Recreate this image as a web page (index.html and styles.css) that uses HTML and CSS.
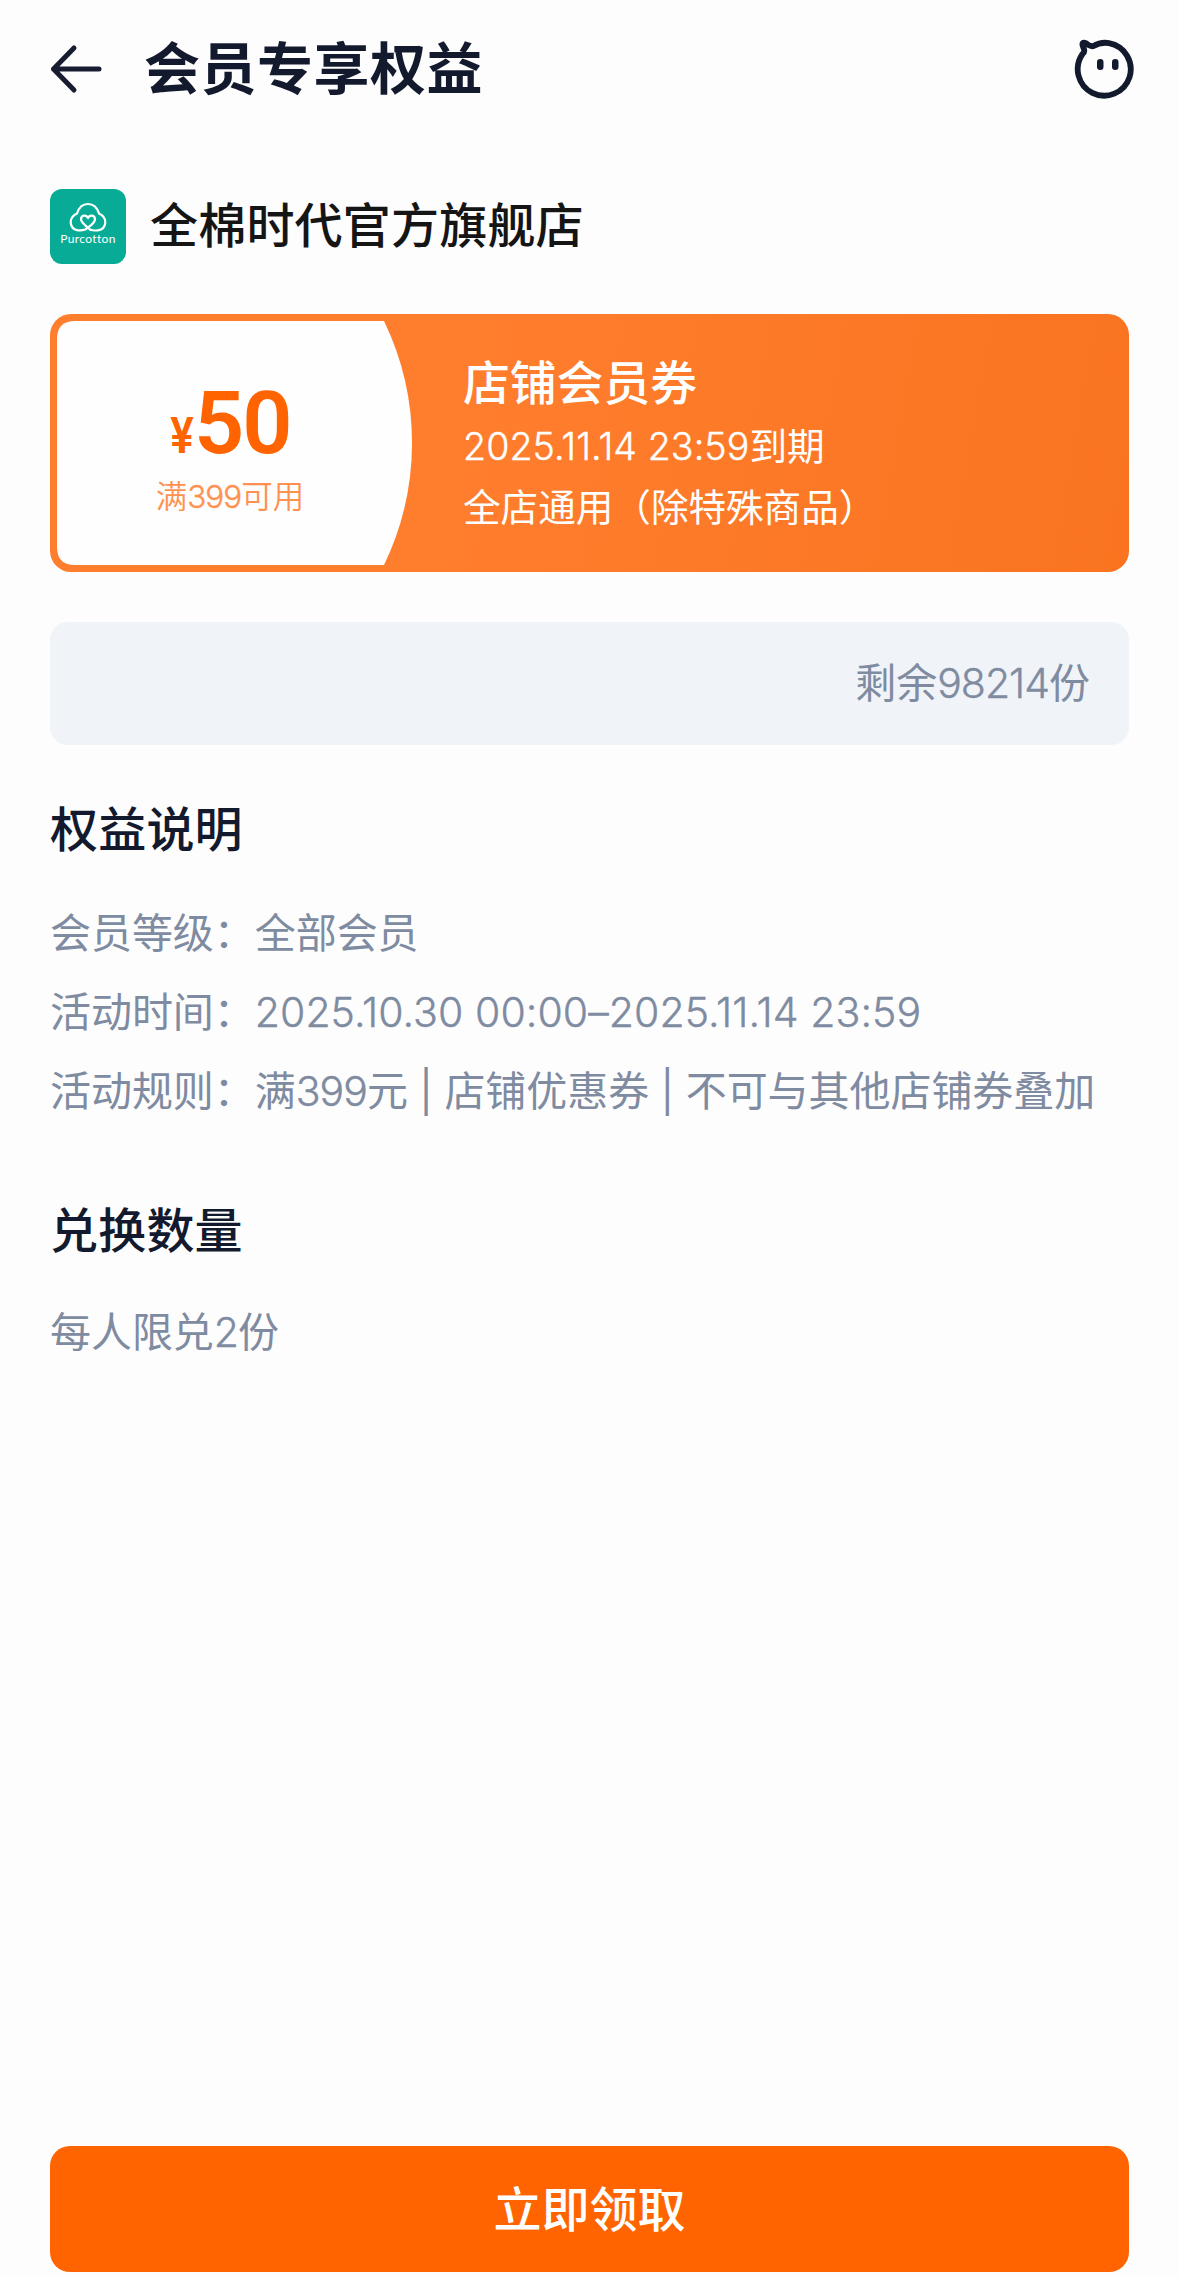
FILE: index.html
```html
<!DOCTYPE html>
<html lang="zh-CN">
<head>
<meta charset="utf-8">
<title>会员专享权益</title>
<link rel="stylesheet" href="styles.css">
</head>
<body>
<div class="page">
  <header class="topbar">
    <svg class="back" width="54" height="50" viewBox="0 0 54 50" fill="none" stroke="#171c30" stroke-width="5" stroke-linecap="round" stroke-linejoin="round"><path d="M24 4 3.500 25 24 46M3.500 25H49"/></svg>
    <h1 class="title">会员专享权益</h1>
    <svg class="service" width="62" height="62" viewBox="0 0 62 62"><path d="M20 8.200C25 5.300 31 4.200 36 5.100A26.500 26.500 0 1 1 9.500 16Q12.600 13.500 10.300 9.500C8.200 5 10 4.100 13 5.200Q16.500 8.500 20 8.200Z" fill="none" stroke="#131a2e" stroke-width="5.800" stroke-linejoin="round"/><rect x="24" y="21" width="6.500" height="11" rx="3.200" fill="#131a2e"/><rect x="39" y="21" width="6.500" height="11" rx="3.200" fill="#131a2e"/></svg>
  </header>
  <main class="content">
    <div class="store">
      <div class="logo">
        <svg width="38" height="30" viewBox="0 0 38 30" fill="none" stroke="#fff" stroke-width="2.200" stroke-linecap="round" stroke-linejoin="round"><path d="M19 25.500C16 28.500 12.500 28.800 9 28.300 0 27-1 15.500 8 11.500 10 5 14 2 19 2S28 5 30 11.500C39 15.500 38 27 29 28.300 26 28.700 23.500 28.600 21.500 27.800"/><path d="M19 25.500Q25.500 21 26 17.500C26 12.500 20.500 12.500 19 16 17.500 12.500 12 12.500 12 17.500Q12.500 21 21.500 27.800"/></svg>
        <span class="brand">Purcotton</span>
      </div>
      <span class="store-name">全棉时代官方旗舰店</span>
    </div>
    <section class="coupon">
      <div class="amount-panel">
        <svg class="panel-shape" viewBox="0 0 355 244"><path d="M18 0H327Q355 58 355 122T327 244H18Q0 244 0 226V18Q0 0 18 0Z" fill="#fefefe"/></svg>
        <div class="amount"><span class="yen">¥</span><span class="num">50</span></div>
        <div class="condition">满<span class="tight">399</span>可用</div>
      </div>
      <div class="coupon-info">
        <div class="coupon-title">店铺会员券</div>
        <div class="coupon-line"><span class="time">2025.11.14 23:59</span>到期</div>
        <div class="coupon-line">全店通用（除特殊商品）</div>
      </div>
    </section>
    <div class="stock">剩余<span class="tight">98214</span>份</div>
    <section class="section">
      <h2 class="heading">权益说明</h2>
      <p class="row">会员等级：全部会员</p>
      <p class="row">活动时间：<span class="time">2025.10.30 00:00–2025.11.14 23:59</span></p>
      <p class="row">活动规则：满<span class="tight">399</span>元 | 店铺优惠券 | 不可与其他店铺券叠加</p>
    </section>
    <section class="section">
      <h2 class="heading">兑换数量</h2>
      <p class="row">每人限兑<span class="tight">2</span>份</p>
    </section>
  </main>
  <button class="claim">立即领取</button>
</div>
</body>
</html>
```
FILE: styles.css
```css
* { box-sizing: border-box; margin: 0; padding: 0; }
body { background: #fdfdfd; font-family: Inter, "Noto Sans CJK SC", sans-serif; }
.page { width: 1179px; height: 2277px; padding: 0 50px 5px; display: flex; flex-direction: column; overflow: hidden; }
.topbar { height: 139px; display: flex; align-items: center; }
.back { flex: none; margin-bottom: 2px; }
.title { margin: 0 0 10px 40px; font: 700 56px/80px "Noto Sans CJK SC", sans-serif; letter-spacing: .5px; color: #131a2e; flex: 1; }
.service { flex: none; margin: 0 -6px 2px 0; }
.content { flex: 1; padding-top: 50px; }
.store { height: 75px; display: flex; align-items: center; gap: 24px; }
.logo { width: 76px; height: 75px; border-radius: 12px; background: #08ab96; display: flex; flex-direction: column; align-items: center; padding-top: 13px; }
.brand { color: #fff; font: 400 12px/14px Lato, sans-serif; letter-spacing: .35px; }
.store-name { margin-bottom: 10px; font: 500 48px/72px "Noto Sans CJK SC", sans-serif; letter-spacing: .2px; color: #151515; }
.coupon { margin-top: 50px; height: 258px; padding: 7px; display: flex; border-radius: 21px; background: linear-gradient(100deg, #ff7e2e 35%, #fa7420 100%); }
.amount-panel { position: relative; width: 355px; height: 244px; padding: 58px 9px 0 0; display: flex; flex-direction: column; align-items: center; }
.panel-shape { position: absolute; inset: 0; width: 355px; height: 244px; }
.amount { position: relative; height: 95px; margin-right: 2px; display: flex; align-items: baseline; color: #ff6400; font-family: Roboto, sans-serif; font-weight: 600; line-height: 88px; }
.yen { font-size: 50px; transform: scaleX(.88); transform-origin: right; }
.num { font-size: 88px; letter-spacing: -2px; }
.condition { position: relative; height: 46px; line-height: 46px; font-size: 31.500px; font-weight: 350; color: #ff9150; }
.coupon-info { padding: 28px 0 0 51px; color: #fff; }
.coupon-title { font: 500 46.800px/62px "Noto Sans CJK SC", sans-serif; margin-bottom: 5px; }
.coupon-line { font-size: 37.600px; line-height: 61px; font-weight: 400; white-space: nowrap; }
.stock { margin-top: 50px; height: 123px; line-height: 123px; padding-right: 39px; border-radius: 18px; background: #f0f4f8; color: #7f8ba1; text-align: right; font-size: 41px; }
.section { padding-top: 45px; }
.section + .section { padding-top: 60px; }
.heading { font: 500 48px/72px "Noto Sans CJK SC", sans-serif; letter-spacing: .2px; color: #131a2e; margin-bottom: 32px; }
.section + .section .heading { margin-bottom: 30px; }
.row { height: 79px; line-height: 79px; font-size: 41px; color: #7f8ba1; white-space: nowrap; letter-spacing: -.05px; }
.time { font-weight: 300; letter-spacing: .07px; -webkit-text-stroke: .4px currentColor; }
.tight { font-weight: 300; letter-spacing: -1px; -webkit-text-stroke: .4px currentColor; }
.claim { flex: none; display: block; width: 100%; height: 126px; padding-bottom: 6px; border: 0; border-radius: 20px; background: #ff6400; color: #fff; font: 500 48px/120px "Noto Sans CJK SC", sans-serif; }
```
